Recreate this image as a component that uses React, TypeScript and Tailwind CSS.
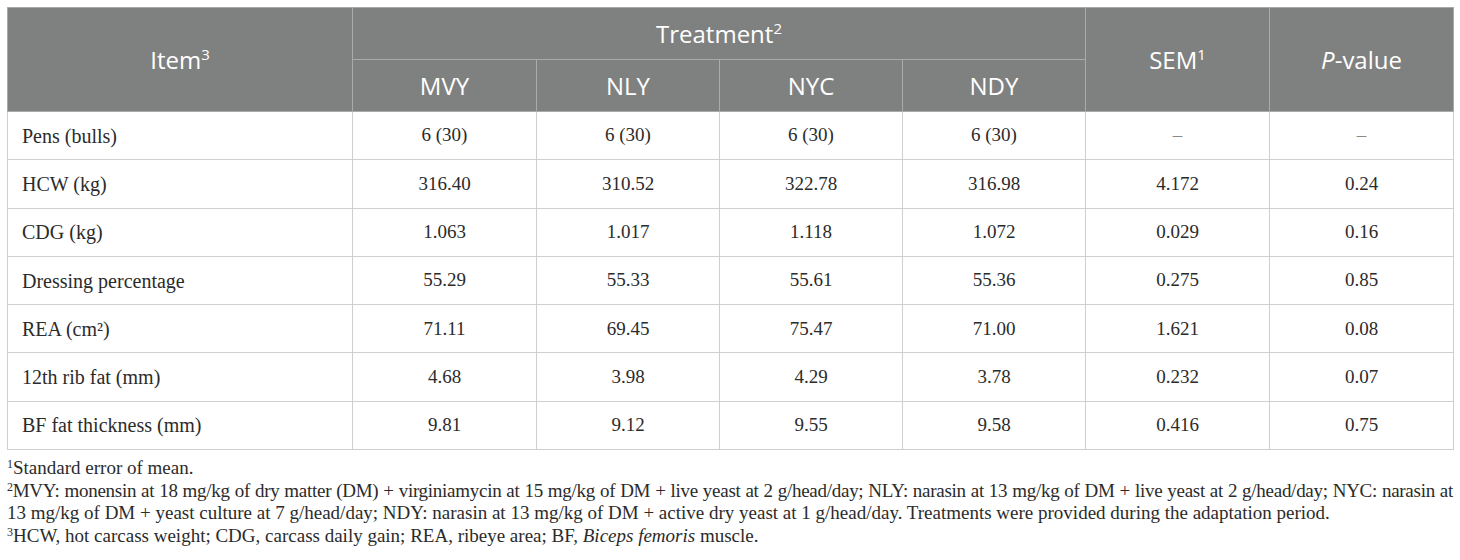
import React from "react";

const rows: string[][] = [
  ["Pens (bulls)", "6 (30)", "6 (30)", "6 (30)", "6 (30)", "–", "–"],
  ["HCW (kg)", "316.40", "310.52", "322.78", "316.98", "4.172", "0.24"],
  ["CDG (kg)", "1.063", "1.017", "1.118", "1.072", "0.029", "0.16"],
  ["Dressing percentage", "55.29", "55.33", "55.61", "55.36", "0.275", "0.85"],
  ["REA (cm²)", "71.11", "69.45", "75.47", "71.00", "1.621", "0.08"],
  ["12th rib fat (mm)", "4.68", "3.98", "4.29", "3.78", "0.232", "0.07"],
  ["BF fat thickness (mm)", "9.81", "9.12", "9.55", "9.58", "0.416", "0.75"],
];

const sans = { fontFamily: '"Open Sans", "Noto Sans", sans-serif' } as const;
const serif = { fontFamily: '"Liberation Serif", "Times New Roman", serif' } as const;

const thCls =
  "bg-[#7f8180] text-white font-normal text-[24px] border border-[#a9abaa] text-center align-middle";

export default function App() {
  return (
    <div className="bg-white w-[1460px] h-[560px] pl-[7px] pt-[7px]">
      <table className="border-collapse table-fixed w-[1446px]">
        <colgroup>
          <col className="w-[345px]" />
          <col className="w-[184px]" />
          <col className="w-[183px]" />
          <col className="w-[183px]" />
          <col className="w-[183px]" />
          <col className="w-[184px]" />
          <col className="w-[184px]" />
        </colgroup>
        <thead>
          <tr className="h-[52px]">
            <th rowSpan={2} className={thCls} style={sans}>
              Item<sup className="text-[15px] -top-[9px]">3</sup>
            </th>
            <th colSpan={4} className={thCls} style={sans}>
              Treatment<sup className="text-[15px] -top-[9px]">2</sup>
            </th>
            <th rowSpan={2} className={thCls} style={sans}>
              SEM<sup className="text-[15px] -top-[9px]">1</sup>
            </th>
            <th rowSpan={2} className={thCls} style={sans}>
              <i>P</i>-value
            </th>
          </tr>
          <tr className="h-[52px]">
            {["MVY", "NLY", "NYC", "NDY"].map((t) => (
              <th key={t} className={thCls} style={sans}>
                {t}
              </th>
            ))}
          </tr>
        </thead>
        <tbody>
          {rows.map((r, i) => (
            <tr key={i} className="h-[48.3px]">
              {r.map((c, j) => (
                <td
                  key={j}
                  className={
                    j === 0
                      ? "border border-[#cfcfcf] text-[20px] text-[#2b2b2b] align-middle text-left pl-[14px]"
                      : c === "–"
                      ? "border border-[#cfcfcf] text-[19px] text-[#8a8a8a] align-middle text-center"
                      : "border border-[#cfcfcf] text-[19px] text-[#2b2b2b] align-middle text-center"
                  }
                  style={serif}
                >
                  {c}
                </td>
              ))}
            </tr>
          ))}
        </tbody>
      </table>
      <div
        className="text-[19px] leading-[22.5px] text-[#2b2b2b] mt-[7px] whitespace-nowrap w-[1446px]"
        style={serif}
      >
        <div>
          <sup className="text-[12px]">1</sup>Standard error of mean.
        </div>
        <div className="tracking-[-0.27px] [text-align-last:justify] text-justify">
          <sup className="text-[12px]">2</sup>MVY: monensin at 18 mg/kg of dry matter (DM) + virginiamycin at 15 mg/kg of DM + live yeast at 2 g/head/day; NLY: narasin at 13 mg/kg of DM + live yeast at 2 g/head/day; NYC: narasin at
        </div>
        <div>
          13 mg/kg of DM + yeast culture at 7 g/head/day; NDY: narasin at 13 mg/kg of DM + active dry yeast at 1 g/head/day. Treatments were provided during the adaptation period.
        </div>
        <div>
          <sup className="text-[12px]">3</sup>HCW, hot carcass weight; CDG, carcass daily gain; REA, ribeye area; BF, <i>Biceps femoris</i> muscle.
        </div>
      </div>
    </div>
  );
}
